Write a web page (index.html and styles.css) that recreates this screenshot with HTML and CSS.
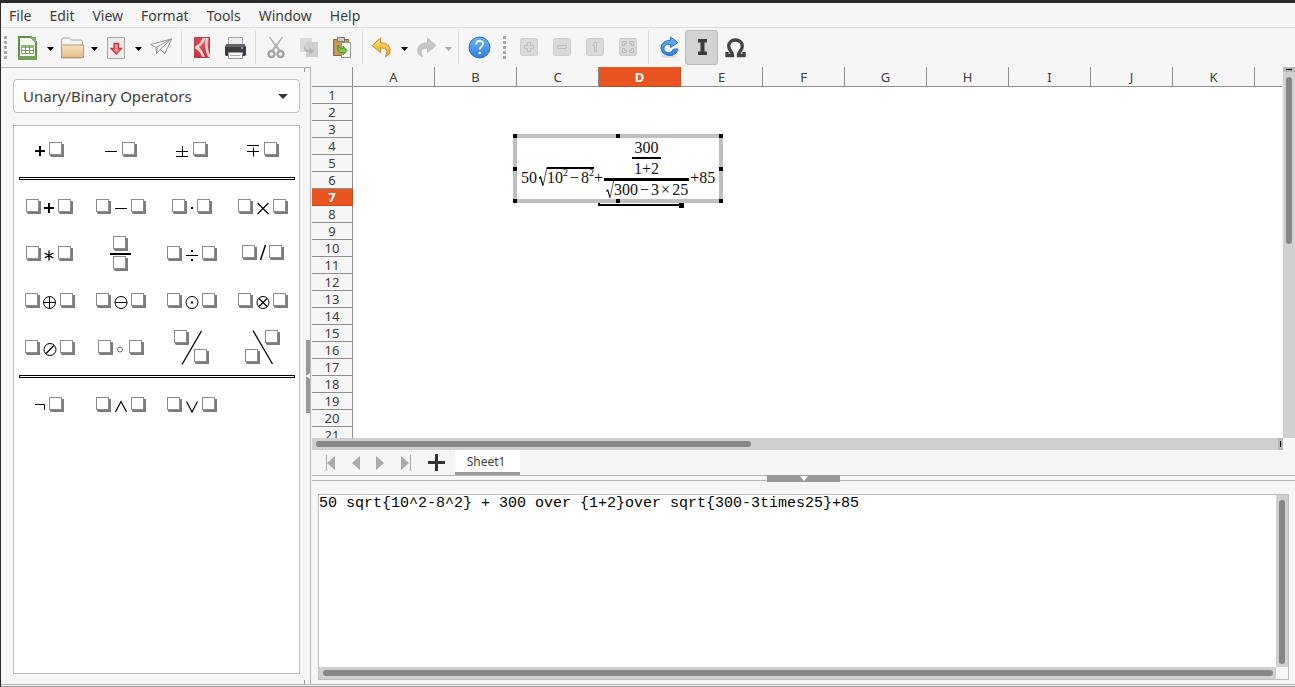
FILE: index.html
```html
<!DOCTYPE html>
<html lang="en">
  <head>
    <meta charset="UTF-8" />
    <meta name="viewport" content="width=device-width, initial-scale=1.0" />
    <title>Formula Editor</title>
    <link rel="stylesheet" href="styles.css">
  </head>
  <body>
    <!-- Shared shapes -->
    <svg class="defs" aria-hidden="true">
      <symbol id="box" viewBox="0 0 15 15">
        <path d="M2 2h13v13H2L1 14V1z" fill="#7c7c7c" />
        <rect x=".5" y=".5" width="12" height="12" fill="#fff" stroke="#8c8c8c" />
      </symbol>
      <symbol id="caret" viewBox="0 0 7 4"><path d="M0 0h7L3.500 4z" fill="currentColor" /></symbol>
      <linearGradient id="gold" x2="0" y2="1"><stop stop-color="#fce28a" /><stop offset="1" stop-color="#e8a317" /></linearGradient>
      <linearGradient id="tan" x2="0" y2="1"><stop stop-color="#f5e3c4" /><stop offset="1" stop-color="#e3bd84" /></linearGradient>
      <linearGradient id="blue" x2="0" y2="1"><stop stop-color="#6db3f5" /><stop offset="1" stop-color="#2f7fdb" /></linearGradient>
      <linearGradient id="red" x2="0" y2="1"><stop stop-color="#e9656b" /><stop offset="1" stop-color="#c32f3c" /></linearGradient>
    </svg>

    <nav class="menubar">
      <button>File</button>
      <button>Edit</button>
      <button>View</button>
      <button>Format</button>
      <button>Tools</button>
      <button>Window</button>
      <button>Help</button>
    </nav>

    <div class="toolbar">
      <span class="grip"></span>
      <button class="tool" aria-label="New">
        <svg viewBox="0 0 24 24"><path d="M2 1h12l5 5v17H2z" fill="#f4f9f0" stroke="#5d8f46" stroke-width="2" /><path d="M13 1h6v6z" fill="#86b56e" /><path d="M1 20h19v4H1z" fill="#6fa355" /><path d="M4.500 9.500h12v8h-12z" fill="#fff" stroke="#6fa355" /><path d="M4 9h13v3H4z" fill="#8fbd79" /><path d="M8.500 10v8M12.500 10v8M5 14.500h12" stroke="#6fa355" /></svg>
      </button>
      <button class="more" aria-label="New options"><svg viewBox="0 0 7 4"><use href="#caret" /></svg></button>
      <button class="tool" aria-label="Open">
        <svg viewBox="0 0 24 24"><path d="M.5 22V4l1-2h7l2 2h10l1 1v17z" fill="#f3f3f3" stroke="#a8a8a8" /><path d="M.5 9h22v12.500H.5z" fill="url(#tan)" stroke="#bd9a6b" /></svg>
      </button>
      <button class="more" aria-label="Open options"><svg viewBox="0 0 7 4"><use href="#caret" /></svg></button>
      <button class="tool" aria-label="Save">
        <svg viewBox="0 0 24 24"><path d="M2.500 1.500h17v21h-17z" fill="#ececec" stroke="#a5a5a5" /><path d="M9 7.500h4.500v5h3L11.200 18 6 12.500h3z" fill="#f28b8f" stroke="#d4313c" stroke-width="1.300" /></svg>
      </button>
      <button class="more" aria-label="Save options"><svg viewBox="0 0 7 4"><use href="#caret" /></svg></button>
      <button class="tool" aria-label="Send">
        <svg viewBox="0 0 24 24"><path d="M1.500 8.500 22.500 3 16 17.500l-5-4-3.500 4-.5-6zM7 11.500 22.500 3 11 13.500M7.500 17.500l1-6" fill="#fafafa" stroke="#979797" stroke-linejoin="round" /></svg>
      </button>
      <span class="sep"></span>
      <button class="tool" aria-label="Export as PDF">
        <svg viewBox="0 0 24 24"><path d="M4.500 1.500h15v20h-15z" fill="url(#red)" stroke="#b83a43" /><path d="M5 2h3l5 0C12 6 9 9 5 10z" fill="#d9424c" /><path d="M12.500 2C11 6 8 9.500 5 10.500v2c4 2 6 5 7 8.500h3c-1.500-4-3-7-6-10 3-2 5.500-5 6.500-9z" fill="#f3d3d5" /><path d="M17 2c-1.500 7-.5 13 2.500 19" fill="none" stroke="#f6cfd1" stroke-width="2.500" /></svg>
      </button>
      <button class="tool" aria-label="Print">
        <svg viewBox="0 0 24 24"><path d="M5.500 1.500h14v8h-14z" fill="#ededed" stroke="#a2a2a2" /><path d="M4 8h17l2 3v8l-1 1H3l-1-1v-8z" fill="#3a3c3e" /><path d="M4 8h17l2 3H2z" fill="#626466" /><path d="M18 11h2v2h-2z" fill="#43b5f5" /><path d="M5.500 16.500h14v6h-14z" fill="#fafafa" stroke="#999" /><path d="M7 19.500h10" stroke="#aaa" /></svg>
      </button>
      <span class="sep"></span>
      <button class="tool off" aria-label="Cut">
        <svg viewBox="0 0 24 24"><path d="M5.500 1 15 15.500 17 15zM18.500 1 9 15.500 7 15z" fill="#c4c4c4" stroke="#adadad" /><circle cx="7.500" cy="18" r="3" fill="none" stroke="#a5a5a5" stroke-width="2.500" /><circle cx="16.500" cy="18" r="3" fill="none" stroke="#a5a5a5" stroke-width="2.500" /></svg>
      </button>
      <button class="tool off" aria-label="Copy">
        <svg viewBox="0 0 24 24"><path d="M3 2h12v14H3z" fill="#dadada" /><path d="M9 6h12v15H9z" fill="#cfcfcf" /><path d="M8 9c0 4 1 5 4 5v-3l5 4-5 4v-3c-5 0-6-3-4-7z" fill="#b4b4b4" /></svg>
      </button>
      <button class="tool" aria-label="Paste">
        <svg viewBox="0 0 24 24"><path d="M3.500 3.500h15v16h-15z" fill="#c69757" stroke="#8f6834" /><path d="M11.500 6.500h9v15h-9z" fill="#f7f7f7" stroke="#999" /><path d="M7.500 1.500h7v4h-7z" fill="#ccc" stroke="#777" /><path d="M8 9c-1 6 1 8 5 7.500V19l4-4.500L13 10v2.500c-3 0-4-1-5-3.500z" fill="#7cc644" stroke="#448a1b" /></svg>
      </button>
      <span class="sep"></span>
      <button class="tool" aria-label="Undo">
        <svg viewBox="0 0 24 24"><path d="M1 9.500 9.500 2v5c8-.5 11 5 9 11l-4 2.500c3-6 1-8.500-5-8.500v4.500z" fill="url(#gold)" stroke="#c68a1c" /></svg>
      </button>
      <button class="more" aria-label="Undo list"><svg viewBox="0 0 7 4"><use href="#caret" /></svg></button>
      <button class="tool off" aria-label="Redo">
        <svg viewBox="0 0 24 24"><path d="M21 9.500 12.500 2v5c-8-.5-11 5-9 11l4 2.500c-3-6-1-8.500 5-8.500v4.500z" fill="#c8c8c8" stroke="#bcbcbc" /></svg>
      </button>
      <button class="more off" aria-label="Redo list"><svg viewBox="0 0 7 4"><use href="#caret" /></svg></button>
      <span class="sep"></span>
      <button class="tool" aria-label="Help">
        <svg viewBox="0 0 24 24"><circle cx="12.500" cy="11.500" r="10.500" fill="url(#blue)" stroke="#2b6fbe" /><path d="M9.200 8.500c0-5 7-4.500 6.800-.5-.1 2.500-3.300 2.700-3.300 5.500" fill="none" stroke="#fff" stroke-width="1.800" /><circle cx="12.700" cy="17" r="1.300" fill="#fff" /></svg>
      </button>
      <span class="grip grip-mid"></span>
      <button class="tool off" aria-label="Zoom in">
        <svg viewBox="0 0 24 24"><rect x="3.500" y="2.500" width="17" height="17" rx="2" fill="#dadada" stroke="#cdcdcd" /><path d="M10.500 6.500h3v3h3v3h-3v3h-3v-3h-3v-3h3z" fill="none" stroke="#bdbdbd" /></svg>
      </button>
      <button class="tool off" aria-label="Zoom out">
        <svg viewBox="0 0 24 24"><rect x="3.500" y="2.500" width="17" height="17" rx="2" fill="#dadada" stroke="#cdcdcd" /><path d="M7.500 9.500h9v3h-9z" fill="none" stroke="#bdbdbd" /></svg>
      </button>
      <button class="tool off" aria-label="Zoom 100%">
        <svg viewBox="0 0 24 24"><rect x="3.500" y="2.500" width="17" height="17" rx="2" fill="#dadada" stroke="#cdcdcd" /><path d="M10 8.500 11.500 6.500h2v9h-2v-6H10z" fill="none" stroke="#bdbdbd" /></svg>
      </button>
      <button class="tool off" aria-label="Show all">
        <svg viewBox="0 0 24 24"><rect x="3.500" y="2.500" width="17" height="17" rx="2" fill="#dadada" stroke="#cdcdcd" /><path d="M6.500 9.500v-4h4v2h-2v2zM13.500 5.500h4v4h-2v-2h-2zM6.500 12.500h2v2h2v2h-4zM15.500 12.500h2v4h-4v-2h2z" fill="none" stroke="#bababa" /></svg>
      </button>
      <span class="sep"></span>
      <button class="tool" aria-label="Update">
        <svg viewBox="0 0 24 24"><ellipse cx="12" cy="20.500" rx="8" ry="1.500" fill="#ddd" /><path d="M13.500 1 21 6.500l-7.500 5V8.500c-4-1-6.500 1-6.500 4s4 6 8 3l1.500-2.500h4.500c-1 4.500-5 7-9 6.500-5-.5-8-3.500-8-7.500 0-4.500 4-8 9.500-7.500z" fill="url(#blue)" stroke="#2b72c4" /></svg>
      </button>
      <button class="tool pressed" aria-label="Formula cursor" aria-pressed="true">
        <svg viewBox="0 0 24 24"><path d="M8 3h9v3.500h-2.500v9H17V19H8v-3.500h2.500v-9H8z" fill="#3c3c3c" /></svg>
      </button>
      <button class="tool" aria-label="Symbols">
        <svg viewBox="0 0 24 24"><path d="M4 16v3.500h5.500c0-4-3.800-5-3.800-9.500 0-3.500 2.800-6 6.800-6s6.800 2.500 6.800 6c0 4.500-3.800 5.500-3.800 9.500H21V16" fill="none" stroke="#444" stroke-width="3.400" /></svg>
      </button>
    </div>

    <div class="workspace">
      <aside class="sidebar">
        <div class="category">
          <select aria-label="Element category">
            <option>Unary/Binary Operators</option>
          </select>
          <svg viewBox="0 0 10 5"><path d="M0 0h10L5 5z" fill="#333" /></svg>
        </div>
        <div class="elements">
          <div class="element-rows">
            <button aria-label="Plus sign"><svg viewBox="0 0 71 47"><path d="M21 25h10M26 20v10" stroke-width="2" /><use href="#box" x="35" y="16" width="15" height="15" /></svg></button>
            <button aria-label="Minus sign"><svg viewBox="0 0 71 47"><path d="M20 25.500h12" /><use href="#box" x="37" y="16" width="15" height="15" /></svg></button>
            <button aria-label="Plus minus"><svg viewBox="0 0 71 47"><path d="M20 25.500h12M26.500 20v10M20 30.500h12" /><use href="#box" x="37" y="16" width="15" height="15" /></svg></button>
            <button aria-label="Minus plus"><svg viewBox="0 0 71 47"><path d="M20 19.500h12M26.500 21.500v9M20 25.500h12" /><use href="#box" x="37" y="16" width="15" height="15" /></svg></button>
          </div>
          <hr />
          <div class="element-rows">
            <button aria-label="Addition"><svg viewBox="0 0 71 47"><use href="#box" x="12" y="16" width="15" height="15" /><path d="M30 25h10M35 20v10" stroke-width="2" /><use href="#box" x="44" y="16" width="15" height="15" /></svg></button>
            <button aria-label="Subtraction"><svg viewBox="0 0 71 47"><use href="#box" x="11" y="16" width="15" height="15" /><path d="M30 25.500h12" /><use href="#box" x="46" y="16" width="15" height="15" /></svg></button>
            <button aria-label="Multiplication dot"><svg viewBox="0 0 71 47"><use href="#box" x="16" y="16" width="15" height="15" /><path d="M35 25h2" stroke-width="2" /><use href="#box" x="41" y="16" width="15" height="15" /></svg></button>
            <button aria-label="Multiplication cross"><svg viewBox="0 0 71 47"><use href="#box" x="11" y="16" width="15" height="15" /><path d="m30.500 20 11 11m0-11-11 11" stroke-width="1.200" /><use href="#box" x="46" y="16" width="15" height="15" /></svg></button>

            <button aria-label="Multiplication star"><svg viewBox="0 0 71 47"><use href="#box" x="12" y="16" width="15" height="15" /><path d="M35 20.500v10M30.700 23l8.600 5M39.300 23l-8.600 5" stroke-width="1.300" /><use href="#box" x="44" y="16" width="15" height="15" /></svg></button>
            <button aria-label="Fraction"><svg viewBox="0 0 71 47"><use href="#box" x="28" y="6" width="15" height="15" /><path d="M25 24h21" stroke-width="2" /><use href="#box" x="28" y="26" width="15" height="15" /></svg></button>
            <button aria-label="Division"><svg viewBox="0 0 71 47"><use href="#box" x="11" y="16" width="15" height="15" /><path d="M30 25.500h12" /><path d="M35 21h2M35 30h2" stroke-width="2" /><use href="#box" x="46" y="16" width="15" height="15" /></svg></button>
            <button aria-label="Division slash"><svg viewBox="0 0 71 47"><use href="#box" x="15" y="15" width="15" height="15" /><path d="m33.500 30 5-15" stroke-width="1.500" /><use href="#box" x="42" y="15" width="15" height="15" /></svg></button>

            <button aria-label="Circled plus"><svg viewBox="0 0 71 47"><use href="#box" x="11" y="16" width="15" height="15" /><circle cx="35.500" cy="25.500" r="6" /><path d="M29.500 25.500h12M35.500 20v11" /><use href="#box" x="46" y="16" width="15" height="15" /></svg></button>
            <button aria-label="Circled minus"><svg viewBox="0 0 71 47"><use href="#box" x="11" y="16" width="15" height="15" /><circle cx="36" cy="25.500" r="6" /><path d="M30 25.500h12" /><use href="#box" x="46" y="16" width="15" height="15" /></svg></button>
            <button aria-label="Circled dot"><svg viewBox="0 0 71 47"><use href="#box" x="11" y="16" width="15" height="15" /><circle cx="36" cy="25.500" r="6" /><path d="M35 25.500h2" stroke-width="2" /><use href="#box" x="46" y="16" width="15" height="15" /></svg></button>
            <button aria-label="Circled times"><svg viewBox="0 0 71 47"><use href="#box" x="11" y="16" width="15" height="15" /><circle cx="36" cy="25.500" r="6" /><path d="m32 21.500 8 8m0-8-8 8" stroke-width="1.200" /><use href="#box" x="46" y="16" width="15" height="15" /></svg></button>

            <button aria-label="Circled slash"><svg viewBox="0 0 71 47"><use href="#box" x="11" y="16" width="15" height="15" /><circle cx="36" cy="25.500" r="6" /><path d="m32 29.500 8-8" stroke-width="1.200" /><use href="#box" x="46" y="16" width="15" height="15" /></svg></button>
            <button aria-label="Concatenate"><svg viewBox="0 0 71 47"><use href="#box" x="13" y="16" width="15" height="15" /><circle cx="35" cy="25.500" r="2.500" stroke="#666" /><use href="#box" x="44" y="16" width="15" height="15" /></svg></button>
            <button aria-label="Wide slash"><svg viewBox="0 0 71 47"><use href="#box" x="18" y="6" width="15" height="15" /><path d="M45.500 7 26 40.500" stroke-width="1.300" /><use href="#box" x="38" y="25" width="15" height="15" /></svg></button>
            <button aria-label="Wide backslash"><svg viewBox="0 0 71 47"><use href="#box" x="38" y="6" width="15" height="15" /><path d="M26 6.500 45.500 40" stroke-width="1.300" /><use href="#box" x="18" y="25" width="15" height="15" /></svg></button>
          </div>
          <hr />
          <div class="element-rows">
            <button aria-label="Logical not"><svg viewBox="0 0 71 47"><path d="M21 23.500h9.500V29" /><use href="#box" x="35" y="16" width="15" height="15" /></svg></button>
            <button aria-label="Logical and"><svg viewBox="0 0 71 47"><use href="#box" x="11" y="16" width="15" height="15" /><path d="M30.500 31 36 20.500 41.500 31" stroke-width="1.200" /><use href="#box" x="46" y="16" width="15" height="15" /></svg></button>
            <button aria-label="Logical or"><svg viewBox="0 0 71 47"><use href="#box" x="11" y="16" width="15" height="15" /><path d="M30.500 20.500 36 31l5.500-10.500" stroke-width="1.200" /><use href="#box" x="46" y="16" width="15" height="15" /></svg></button>
          </div>
        </div>
        <span class="dock-handle"></span>
      </aside>

      <main class="document">
        <div class="sheet-area">
          <div class="sheet">
            <table>
              <thead>
                <tr>
                  <th class="corner"></th>
                  <th>A</th><th>B</th><th>C</th><th class="selected">D</th><th>E</th><th>F</th>
                  <th>G</th><th>H</th><th>I</th><th>J</th><th>K</th><th></th>
                </tr>
              </thead>
              <tbody>
                <tr><th>1</th></tr>
                <tr><th>2</th></tr>
                <tr><th>3</th></tr>
                <tr><th>4</th></tr>
                <tr><th>5</th></tr>
                <tr><th>6</th></tr>
                <tr><th class="selected">7</th><td></td><td></td><td></td><td class="active"></td></tr>
                <tr><th>8</th></tr>
                <tr><th>9</th></tr>
                <tr><th>10</th></tr>
                <tr><th>11</th></tr>
                <tr><th>12</th></tr>
                <tr><th>13</th></tr>
                <tr><th>14</th></tr>
                <tr><th>15</th></tr>
                <tr><th>16</th></tr>
                <tr><th>17</th></tr>
                <tr><th>18</th></tr>
                <tr><th>19</th></tr>
                <tr><th>20</th></tr>
                <tr><th>21</th></tr>
              </tbody>
            </table>

            <div class="formula-object">
              <div class="formula">
                <span class="term">50</span>
                <span class="root">
                  <svg viewBox="0 0 8 20"><path d="M0 11.500 1.500 10 4 18.500" fill="none" stroke="#000" stroke-width="1.200" /><path d="M4 19 8 0" fill="none" stroke="#555" /></svg>
                  <span class="radicand">10<sup>2</sup><i>−</i>8<sup>2</sup></span>
                </span>
                <span class="term">+</span>
                <span class="fraction">
                  <span class="fraction inner">
                    <span>300</span>
                    <span class="denominator">1+2</span>
                  </span>
                  <span class="denominator root">
                    <svg viewBox="0 0 8 20"><path d="M0 11.500 1.500 10 4 18.500" fill="none" stroke="#000" stroke-width="1.200" /><path d="M4 19 8 0" fill="none" stroke="#555" /></svg>
                    <span class="wide">300<i>−</i>3<i>×</i>25</span>
                  </span>
                </span>
                <span class="term">+85</span>
              </div>
              <span class="knob n w"></span><span class="knob n c"></span><span class="knob n e"></span>
              <span class="knob m w"></span><span class="knob m e"></span>
              <span class="knob s w"></span><span class="knob s c"></span><span class="knob s e"></span>
            </div>
          </div>
          <div class="scroll-y sheet-scroll-y"><span class="split-box"></span><span class="thumb"></span></div>
        </div>

        <div class="scroll-x sheet-scroll-x"><span class="thumb"></span><span class="split-box"></span></div>

        <div class="tabs">
          <button aria-label="First sheet"><svg viewBox="0 0 14 16"><path d="M1.500 0v16" stroke="#aaa" /><path d="M10 1v14L2 8z" fill="#aaa" /></svg></button>
          <button aria-label="Previous sheet"><svg viewBox="0 0 14 16"><path d="M11 1v14L3 8z" fill="#aaa" /></svg></button>
          <button aria-label="Next sheet"><svg viewBox="0 0 14 16"><path d="M3 1v14l8-7z" fill="#aaa" /></svg></button>
          <button aria-label="Last sheet"><svg viewBox="0 0 14 16"><path d="M13.500 0v16" stroke="#aaa" /><path d="M4 1v14l8-7z" fill="#aaa" /></svg></button>
          <button class="add" aria-label="Add sheet"><svg viewBox="0 0 17 17"><path d="M0 8.500h17M8.500 0v17" stroke="#333" stroke-width="3" /></svg></button>
          <button class="tab">Sheet1</button>
        </div>

        <div class="splitter"><span></span></div>

        <div class="commands">
          <div class="command-box">
            <textarea aria-label="Formula commands" spellcheck="false" wrap="off">50 sqrt{10^2-8^2} + 300 over {1+2}over sqrt{300-3times25}+85</textarea>
            <div class="scroll-y"><span class="thumb"></span></div>
            <div class="scroll-x"><span class="thumb"></span></div>
          </div>
        </div>
      </main>
    </div>
    <footer class="bottom-edge"></footer>
  </body>
</html>
```
FILE: styles.css
```css
:root {
  --bg: #f6f6f6;
  --line: #b5b5b5;
  --grid-line: #8e8e8e;
  --track: #d0d0d0;
  --thumb: #868686;
  --orange: #e95420;
  --text: #3d3d3d;
}

* {
  margin: 0;
  padding: 0;
  box-sizing: border-box;
}

body {
  display: flex;
  flex-direction: column;
  height: 100vh;
  overflow: hidden;
  border-top: 3px solid #2d2b2b;
  border-left: 1px solid #2d2b2b;
  background: var(--bg);
  color: var(--text);
  font: 14px/20px "Noto Sans", "Open Sans", sans-serif;
}

button {
  border: none;
  background: none;
  color: inherit;
  font: inherit;
}

svg {
  display: block;
}

.defs {
  position: absolute;
  width: 0;
  height: 0;
}

/* Menu and toolbar */
.menubar {
  display: flex;
  flex: none;
  gap: 18px;
  height: 25px;
  padding: 3px 8px 1px;
  border-bottom: 1px solid #dcdcdc;
}

.toolbar {
  display: flex;
  flex: none;
  align-items: center;
  height: 39px;
  padding-left: 3px;
}

.grip {
  width: 3px;
  height: 24px;
  margin-right: 6px;
  background: repeating-linear-gradient(#aaa 0 3px, transparent 3px 5px);
}

.grip:first-child {
  margin-right: 5px;
}

.grip-mid {
  margin-left: 8px;
}

.tool {
  display: flex;
  align-items: center;
  justify-content: center;
  width: 33px;
  height: 35px;
}

.tool svg {
  width: 24px;
  height: 24px;
}

.tool.pressed {
  border: 1px solid #b9b9b9;
  border-radius: 3px;
  background: #d3d3d3;
}

.more {
  display: flex;
  justify-content: center;
  width: 11px;
  padding-top: 2px;
  color: #000;
}

.more svg {
  width: 7px;
  height: 4px;
}

.more.off {
  color: #aaa;
}

.sep {
  width: 1px;
  height: 33px;
  margin: 0 3px 0 4px;
  background: #dcdcdc;
}

/* Elements dock */
.workspace {
  display: flex;
  flex: 1;
  min-height: 0;
}

.sidebar {
  position: relative;
  display: flex;
  flex: none;
  flex-direction: column;
  gap: 12px;
  width: 310px;
  padding: 11px 10px 10px 12px;
  border-top: 1px solid var(--line);
  border-right: 1px solid var(--line);
}

.sidebar::before,
.sidebar::after {
  content: "";
  position: absolute;
  right: 5px;
  width: 1px;
  height: 4px;
  background: #999;
}

.sidebar::before {
  top: 0;
}

.sidebar::after {
  bottom: 0;
}

.category {
  position: relative;
}

.category select {
  display: block;
  width: 100%;
  height: 34px;
  padding: 0 9px;
  border: 1px solid #c0c0c0;
  border-radius: 4px;
  background: #fdfdfd;
  color: var(--text);
  font: 15px/20px "Noto Sans", "Open Sans", sans-serif;
  appearance: none;
}

.category svg {
  position: absolute;
  top: 15px;
  right: 12px;
  width: 10px;
  height: 5px;
  pointer-events: none;
}

.elements {
  flex: 1;
  border: 1px solid #c0c0c0;
  background: #fff;
}

.element-rows {
  display: grid;
  grid-template-columns: repeat(4, 71px);
}

.element-rows svg {
  width: 71px;
  height: 47px;
  fill: none;
  stroke: #000;
}

.element-rows use {
  stroke: none;
}

.elements hr {
  height: 3px;
  margin: 4px 4px 3px 5px;
  border: 1px solid #000;
}

.dock-handle {
  position: absolute;
  top: 272px;
  right: 0;
  width: 4px;
  height: 73px;
  background: #999;
}

.dock-handle::after {
  content: "";
  position: absolute;
  top: 33px;
  border: 3px solid transparent;
  border-right: 4px solid #fff;
  border-left: none;
}

/* Spreadsheet */
.document {
  display: flex;
  flex: 1;
  flex-direction: column;
  min-width: 0;
  padding-left: 1px;
}

.sheet-area {
  display: flex;
  flex: 1;
  min-height: 0;
}

.sheet {
  position: relative;
  flex: 1;
  overflow: hidden;
  margin-right: 1px;
  background: #fff;
}

table {
  width: 1025px;
  table-layout: fixed;
  border-spacing: 0;
}

th {
  height: 17px;
  padding-top: 1px;
  border-right: 1px solid var(--grid-line);
  border-bottom: 1px solid var(--grid-line);
  background: var(--bg);
  font-size: 13px;
  font-weight: 400;
  line-height: 15px;
}

thead th {
  width: 82px;
  height: 20px;
  line-height: 18px;
}

th.corner {
  width: 41px;
}

th.selected {
  border-color: #c94a1e;
  background: var(--orange);
  color: #fff;
  font-weight: 700;
}

td.active {
  position: relative;
}

td.active::before {
  content: "";
  position: absolute;
  inset: -1px -1px 0;
  border: 2px solid #000;
}

td.active::after {
  content: "";
  position: absolute;
  right: -3px;
  bottom: -2px;
  width: 5px;
  height: 5px;
  background: #000;
}

/* Embedded formula */
.formula-object {
  position: absolute;
  top: 67px;
  left: 201px;
  border: 4px solid #bfbfbf;
  background: #fff;
  color: #111;
  font: 16px/18px "Liberation Serif", serif;
}

.formula {
  display: flex;
  align-items: flex-end;
  padding: 0 4px;
}

.term {
  margin-bottom: 12px;
}

.root {
  display: flex;
}

.root svg {
  width: 8px;
  height: 20px;
}

.formula > .root {
  margin: 0 0 12px 2px;
}

.radicand {
  border-top: 2px solid #000;
}

.root sup {
  position: relative;
  top: -7px;
  font-size: 10px;
  line-height: 10px;
  vertical-align: baseline;
}

.root i {
  margin: 0 2px;
  font-style: normal;
}

.fraction {
  display: flex;
  flex-direction: column;
  align-items: center;
  margin: 0 1px;
}

.fraction.inner {
  padding-top: 1px;
}

.fraction > .denominator {
  padding: 0 1px 0 2px;
  border-top: 3px solid #000;
}

.fraction.inner > .denominator {
  padding: 1px 2px 0;
  border-top-width: 2px;
}

.fraction .root svg {
  height: 18px;
}

.knob {
  position: absolute;
  width: 4px;
  height: 4px;
  background: #000;
}

.knob.n {
  top: -4px;
}

.knob.m {
  top: calc(50% - 2px);
}

.knob.s {
  bottom: -4px;
}

.knob.w {
  left: -4px;
}

.knob.c {
  left: calc(50% - 2px);
}

.knob.e {
  right: -4px;
}

/* Scrollbars */
.scroll-x,
.scroll-y {
  display: flex;
  background: var(--track);
}

.scroll-y {
  flex-direction: column;
  align-items: center;
  width: 12px;
}

.scroll-x {
  align-items: center;
  height: 12px;
}

.thumb {
  border-radius: 3px;
  background: var(--thumb);
}

.scroll-y .thumb {
  width: 6px;
}

.scroll-x .thumb {
  height: 6px;
}

.sheet-scroll-y .thumb {
  height: 45%;
  margin-top: 5px;
}

.sheet-scroll-x {
  flex: none;
  justify-content: space-between;
  margin-right: 12px;
  padding-left: 4px;
}

.sheet-scroll-x .thumb {
  width: 45%;
}

.split-box {
  display: flex;
  align-items: center;
  justify-content: center;
  background: #b8b8b8;
}

.split-box::after {
  content: "";
  background: #000;
}

.scroll-y .split-box {
  width: 12px;
  height: 5px;
}

.scroll-y .split-box::after {
  width: 6px;
  height: 1px;
}

.scroll-x .split-box {
  width: 5px;
  height: 12px;
}

.scroll-x .split-box::after {
  width: 1px;
  height: 6px;
}

/* Sheet tabs */
.tabs {
  display: flex;
  flex: none;
  align-items: center;
  gap: 10px;
  height: 25px;
  padding-left: 13px;
}

.tabs svg {
  width: 14px;
  height: 16px;
}

.tabs .add {
  margin-left: 7px;
}

.tabs .add svg {
  width: 17px;
  height: 17px;
}

.tab {
  align-self: stretch;
  width: 65px;
  padding: 1px 3px 0 0;
  border-bottom: 3px solid #999;
  background: #fff;
  font-size: 12px;
}

.splitter {
  display: flex;
  flex: none;
  justify-content: center;
  height: 6px;
  border-top: 1px solid var(--line);
  border-bottom: 1px solid var(--line);
}

.splitter span {
  display: flex;
  justify-content: center;
  width: 73px;
  height: 7px;
  margin-top: -1px;
  background: #999;
}

.splitter span::after {
  content: "";
  height: 0;
  margin-top: 1px;
  border: 4px solid transparent;
  border-top: 5px solid #fff;
  border-bottom: none;
}

/* Command window */
.commands {
  flex: none;
  height: 203px;
  padding: 13px 6px 4px;
}

.command-box {
  display: grid;
  grid-template: 1fr 12px / 1fr 12px;
  height: 100%;
  border: 1px solid #bdbdbd;
}

.command-box textarea {
  border: none;
  outline: none;
  overflow: hidden;
  resize: none;
  background: #fff;
  color: #000;
  font: 15px/17px "Liberation Mono", monospace;
}

.command-box .scroll-y {
  padding: 5px 0 3px;
}

.command-box .scroll-y .thumb {
  flex: 1;
}

.command-box .scroll-x {
  padding: 0 3px 0 4px;
}

.command-box .scroll-x .thumb {
  flex: 1;
}

.bottom-edge {
  flex: none;
  height: 3px;
  border-top: 1px solid var(--line);
  border-bottom: 1px solid #999;
}
```
